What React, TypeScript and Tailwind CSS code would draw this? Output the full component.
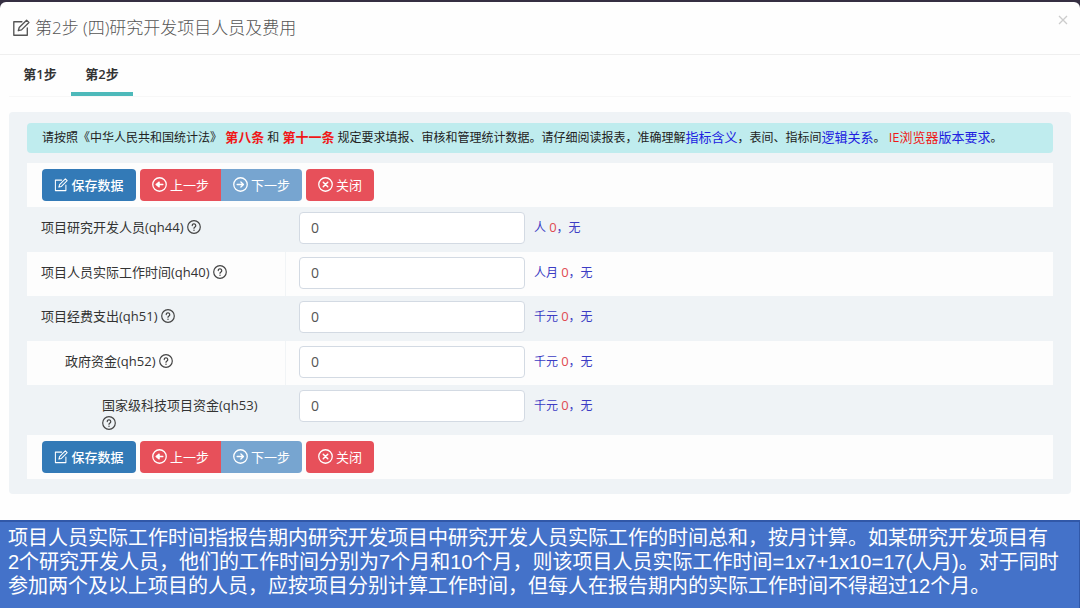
import { useId } from "react";
import type { ReactNode } from "react";

function NoteIcon({ className }: { className: string }) {
  return (
    <svg viewBox="0 0 20 20" className={className} fill="none" stroke="currentColor" strokeWidth="1.5" strokeLinejoin="round" strokeLinecap="round" aria-hidden="true">
      <path d="M11 3H2v15h15v-8" />
      <path d="M7 13l1-3.5 8.2-8.2 2.6 2.6-8.2 8.2L7 13z" />
    </svg>
  );
}

function CircleIcon({ className, children }: { className: string; children: ReactNode }) {
  return (
    <svg viewBox="0 0 20 20" className={className} fill="none" stroke="currentColor" strokeWidth="1.7" strokeLinecap="round" strokeLinejoin="round" aria-hidden="true">
      <circle cx="10" cy="10" r="9" />
      {children}
    </svg>
  );
}

function HelpIcon() {
  return (
    <CircleIcon className="inline-block size-[14px] align-[-2px] text-[#444]">
      <path d="M7.5 8a2.5 2.5 0 1 1 3.9 2c-.9.6-1.4 1-1.4 1.9" />
      <path d="M10 14.4v.3" strokeWidth="2" />
    </CircleIcon>
  );
}

const button = "flex h-8 items-center justify-center gap-[3px] pb-px text-[13px] leading-5 text-white";

function Toolbar() {
  return (
    <div className="flex h-11 items-center gap-1 bg-[#fdfdfd] px-[15px]">
      <button type="button" className={`${button} w-[94px] rounded bg-[#337ab7] font-medium`}>
        <NoteIcon className="size-[14px]" />
        保存数据
      </button>
      <div className="flex">
        <button type="button" className={`${button} w-[81px] rounded-l bg-[#e7505a]`}>
          <CircleIcon className="size-[15px]">
            <path d="M14.5 10H8" />
            <path d="M9.5 6.8L5.5 10l4 3.2z" fill="currentColor" />
          </CircleIcon>
          上一步
        </button>
        <button type="button" disabled className={`${button} w-[81px] rounded-r bg-[#77a5d0]`}>
          <CircleIcon className="size-[15px]">
            <path d="M5.5 10H13M10.5 6.6L14 10l-3.5 3.4" />
          </CircleIcon>
          下一步
        </button>
      </div>
      <button type="button" className={`${button} w-[68px] rounded bg-[#e7505a]`}>
        <CircleIcon className="size-[15px]">
          <path d="M7 7l6 6M13 7l-6 6" strokeWidth="2" />
        </CircleIcon>
        关闭
      </button>
    </div>
  );
}

type Field = { label: string; unit: string; indent: string; striped: boolean; height: string };

const fields: Field[] = [
  { label: "项目研究开发人员(qh44)", unit: "人", indent: "pl-[14px]", striped: false, height: "h-[45px]" },
  { label: "项目人员实际工作时间(qh40)", unit: "人月", indent: "pl-[14px]", striped: true, height: "h-11" },
  { label: "项目经费支出(qh51)", unit: "千元", indent: "pl-[14px]", striped: false, height: "h-[45px]" },
  { label: "政府资金(qh52)", unit: "千元", indent: "pl-[38px]", striped: true, height: "h-11" },
  { label: "国家级科技项目资金(qh53)", unit: "千元", indent: "pl-[75px]", striped: false, height: "h-[50px]" },
];

function FieldRow({ field }: { field: Field }) {
  const id = useId();
  return (
    <div className={`flex ${field.height} ${field.striped ? "bg-[#fdfdfd]" : ""}`}>
      <div className={`w-[259px] shrink-0 border-r pt-[11px] pr-4 text-[13px] leading-[18px] text-[#333] ${field.indent} ${field.striped ? "border-[#f1f4f6]" : "border-transparent"}`}>
        <label htmlFor={id}>{field.label}</label> <HelpIcon />
      </div>
      <div className="flex grow items-start gap-[9px] pt-[5px] pl-[13px]">
        <input
          id={id}
          type="text"
          defaultValue="0"
          className="h-8 w-[226px] rounded border border-[#d3dae3] bg-white px-[11px] pb-[2px] text-[14px] text-[#555]"
        />
        <span className="pt-[5px] text-[12px] leading-5 text-[#3c3cc4]">
          {field.unit} <span className="text-[13px] font-medium text-[#e04a50]">0</span>，无
        </span>
      </div>
    </div>
  );
}

export default function App() {
  return (
    <div className="flex min-h-screen flex-col bg-[#352f42] pt-[2px] font-['Open_Sans','Noto_Sans_CJK_SC',sans-serif]">
      <main className="flex grow flex-col rounded-t-md bg-[#fefefe]">
        <header className="flex h-[53px] items-start justify-between border-b border-[#efefef] pr-[11px] pl-3">
          <h1 className="flex items-center gap-[5px] pt-[14px] text-[17px] leading-6 font-light text-[#555]">
            <NoteIcon className="size-[18px]" />
            第2步 (四)研究开发项目人员及费用
          </h1>
          <button type="button" aria-label="关闭" className="mt-3 text-[#ccc]">
            <svg viewBox="0 0 12 12" className="size-3" fill="none" stroke="currentColor" strokeWidth="1.3" aria-hidden="true">
              <path d="M2 2l8 8M10 2l-8 8" />
            </svg>
          </button>
        </header>
        <nav className="mx-[9px] flex h-[42px] border-b border-[#f7f7f7] text-[13px] leading-5 font-semibold text-[#333]">
          <a href="#step1" className="w-[62px] pt-[9px] text-center">第1步</a>
          <a href="#step2" className="w-[62px] border-b-4 border-[#4db9ba] pt-[9px] text-center">第2步</a>
        </nav>
        <section className="mx-[9px] mt-[15px] rounded-sm bg-[#eff3f6] px-[18px] pt-[11px] pb-[15px]">
          <p className="mb-[10px] rounded-sm bg-[#bfecee] px-[15px] pt-1 pb-[5px] text-[12px] leading-5 text-[#222]">
            请按照《中华人民共和国统计法》 <b className="text-[13px] text-[#f01818]">第八条</b> 和 <b className="text-[13px] text-[#f01818]">第十一条</b>{" "}
            规定要求填报、审核和管理统计数据。请仔细阅读报表，准确理解<a href="#meaning" className="text-[13px] text-[#2020e0]">指标含义</a>，表间、指标间<a href="#logic" className="text-[13px] text-[#2020e0]">逻辑关系</a>。{" "}
            <a href="#browser" className="text-[13px] text-[#2020e0]"><span className="text-[#f01818]">IE浏览器</span>版本要求</a>。
          </p>
          <Toolbar />
          <form>
            {fields.map((field) => (
              <FieldRow key={field.label} field={field} />
            ))}
          </form>
          <Toolbar />
        </section>
      </main>
      <aside className="border-t-2 border-r border-[#3158a8] bg-[#4472c9] px-2 pt-1 pb-[10px] font-['Liberation_Sans','Noto_Sans_CJK_SC',sans-serif] text-[20px] leading-6 text-white">
        项目人员实际工作时间指报告期内研究开发项目中研究开发人员实际工作的时间总和，按月计算。如某研究开发项目有
        <br />
        2个研究开发人员，他们的工作时间分别为7个月和10个月，则该项目人员实际工作时间=1x7+1x10=17(人月)。对于同时
        <br />
        参加两个及以上项目的人员，应按项目分别计算工作时间，但每人在报告期内的实际工作时间不得超过12个月。
      </aside>
    </div>
  );
}
